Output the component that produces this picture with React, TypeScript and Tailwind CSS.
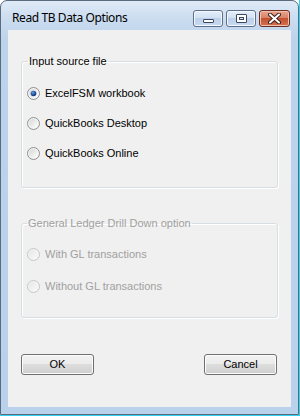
import React from "react";

function Radio({ checked, disabled }: { checked?: boolean; disabled?: boolean }) {
  return (
    <svg width="13" height="13" viewBox="0 0 13 13" className="shrink-0">
      <defs>
        <linearGradient id={disabled ? "rgd" : "rg"} x1="0" y1="0" x2="1" y2="1">
          <stop offset="0" stopColor={disabled ? "#e6e6e6" : "#d6d6d6"} />
          <stop offset="1" stopColor={disabled ? "#fafafa" : "#ffffff"} />
        </linearGradient>
        <radialGradient id="dot" cx="0.4" cy="0.35" r="0.7">
          <stop offset="0" stopColor="#5fa1e6" />
          <stop offset="0.6" stopColor="#1f4f9a" />
          <stop offset="1" stopColor="#0f2c66" />
        </radialGradient>
      </defs>
      <circle cx="6.5" cy="6.5" r="6" fill="#f4f4f4" stroke={disabled ? "#c6c6c6" : "#8e8f8f"} strokeWidth="1" />
      <circle cx="6.5" cy="6.5" r="4.5" fill={`url(#${disabled ? "rgd" : "rg"})`} />
      {checked && <circle cx="6.5" cy="6.5" r="2.8" fill="url(#dot)" />}
    </svg>
  );
}

function RadioRow({ label, checked, disabled }: { label: string; checked?: boolean; disabled?: boolean }) {
  return (
    <div className="flex items-center gap-[5px] h-[13px]">
      <Radio checked={checked} disabled={disabled} />
      <span className={disabled ? "text-[#a0a0a0]" : "text-black"}>{label}</span>
    </div>
  );
}

function WinButton({ label }: { label: string }) {
  return (
    <button className="w-[73px] h-[21px] rounded-[3px] border border-[#707070] bg-[linear-gradient(#f2f2f2_0%,#ebebeb_50%,#dddddd_50%,#cfcfcf_100%)] shadow-[inset_0_0_0_1px_#fcfcfc] text-[11px] text-black leading-none">
      {label}
    </button>
  );
}

export default function App() {
  return (
    <div
      className="w-[300px] h-[416px] bg-white"
      style={{ fontFamily: '"Liberation Sans", Arial, sans-serif' }}
    >
      <div className="w-[300px] h-[416px] border-r border-b border-[#2fd3f0]">
        <div className="w-[299px] h-[415px] rounded-t-[7px] border border-[#5b6b7e] bg-[linear-gradient(180deg,#dfeaf6_0px,#c9dbef_20px,#bcd3ec_40px,#b9d1ea_100%)] flex flex-col">
          {/* title bar */}
          <div className="h-[29px] flex items-start shrink-0">
            <div
              className="pl-[11px] pt-[9px] text-[12px] tracking-[-0.4px] text-black leading-[15px]"
              style={{ fontFamily: '"Noto Sans", "Open Sans", sans-serif' }}
            >
              Read TB Data Options
            </div>
            <div className="ml-auto mt-[9px] mr-[8px] flex gap-[3px]">
              <div className="w-[30px] h-[17px] rounded-[3px] border border-[#5d6f89] bg-[linear-gradient(#e4eefa_0%,#d2e1f3_45%,#bdd0ea_50%,#c9dbf1_100%)] shadow-[inset_0_0_0_1px_#f4f8fd] flex items-center justify-center">
                <div className="w-[11px] h-[4px] mt-[5px] border border-[#39475c] bg-white rounded-[1px]" />
              </div>
              <div className="w-[30px] h-[17px] rounded-[3px] border border-[#5d6f89] bg-[linear-gradient(#e4eefa_0%,#d2e1f3_45%,#bdd0ea_50%,#c9dbf1_100%)] shadow-[inset_0_0_0_1px_#f4f8fd] flex items-center justify-center">
                <div className="w-[11px] h-[9px] border border-[#39475c] bg-white rounded-[1px] flex items-center justify-center">
                  <div className="w-[5px] h-[3px] border border-[#39475c] bg-[#dfe7f1]" />
                </div>
              </div>
              <div className="w-[31px] h-[17px] rounded-[3px] border border-[#6a2e22] bg-[linear-gradient(#e9a58f_0%,#d8826a_45%,#c25230_50%,#d3714f_100%)] shadow-[inset_0_0_0_1px_#f1bfae] flex items-center justify-center">
                <svg width="13" height="11" viewBox="0 0 13 11">
                  <path d="M2 1.5 L11 9.5 M11 1.5 L2 9.5" stroke="#3b1f1a" strokeWidth="4" strokeLinecap="round" />
                  <path d="M2 1.5 L11 9.5 M11 1.5 L2 9.5" stroke="#ffffff" strokeWidth="2" strokeLinecap="round" />
                </svg>
              </div>
            </div>
          </div>
          {/* client */}
          <div className="flex-1 mx-[7px] mb-[7px] bg-[#f0f0f0] flex flex-col text-[11px] leading-[13px]">
            <fieldset className="mx-[13px] mt-[25px] h-[133px] border border-[#d5dfe5] rounded-[3px] shadow-[inset_1px_1px_0_#ffffff,1px_1px_0_#ffffff] px-[5px] flex flex-col gap-[17px] pt-[19px]">
              <legend className="px-[1px] ml-[1px] text-black">Input source file</legend>
              <RadioRow label="ExcelFSM workbook" checked />
              <RadioRow label="QuickBooks Desktop" />
              <RadioRow label="QuickBooks Online" />
            </fieldset>
            <fieldset className="mx-[13px] mt-[29px] h-[101px] border border-[#d5dfe5] rounded-[3px] shadow-[inset_1px_1px_0_#ffffff,1px_1px_0_#ffffff] px-[5px] flex flex-col gap-[19px] pt-[18px]">
              <legend className="px-[1px] text-[#a0a0a0]">General Ledger Drill Down option</legend>
              <RadioRow label="With GL transactions" disabled />
              <RadioRow label="Without GL transactions" disabled />
            </fieldset>
            <div className="mt-auto mb-[32px] mx-[13px] flex justify-between pr-[1px]">
              <WinButton label="OK" />
              <WinButton label="Cancel" />
            </div>
          </div>
        </div>
      </div>
    </div>
  );
}
